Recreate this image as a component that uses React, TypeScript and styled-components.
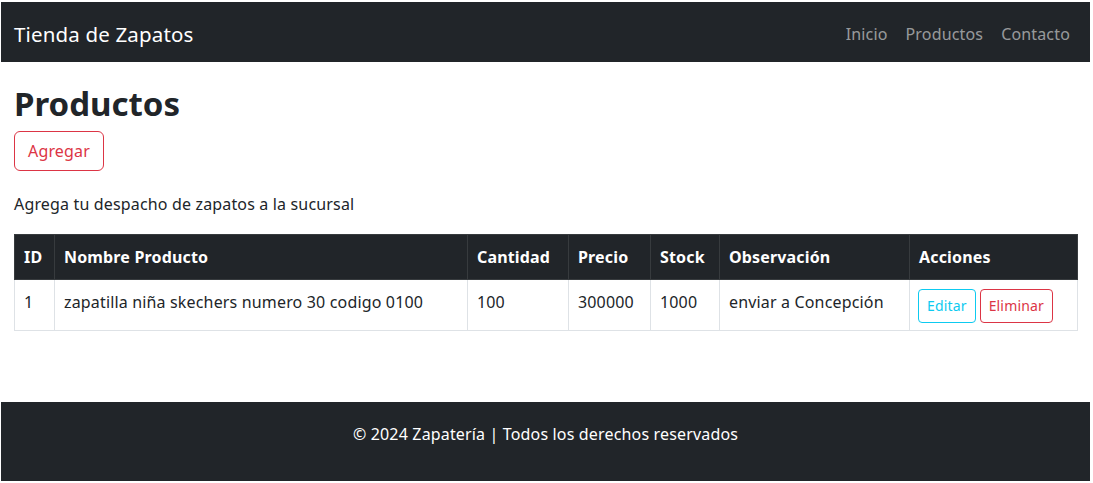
import React from "react";
import styled, { createGlobalStyle } from "styled-components";

const GlobalStyle = createGlobalStyle`
  html, body { margin: 0; padding: 0; background: #ffffff; }
  body {
    font-family: "Noto Sans", "Open Sans", sans-serif;
    font-size: 16px;
    line-height: 1.5;
    letter-spacing: 0.16px;
    color: #212529;
  }
  * { box-sizing: border-box; }
`;

const Page = styled.div`
  padding: 2px 3px 2px 1px;
  display: flex;
  flex-direction: column;
`;

const Navbar = styled.nav`
  height: 60px;
  background: #212529;
  display: flex;
  align-items: center;
  justify-content: space-between;
  padding: 4px 11px 0 13px;
`;

const Brand = styled.a`
  font-size: 20.5px;
  line-height: 30px;
  color: #ffffff;
  text-decoration: none;
`;

const NavList = styled.ul`
  list-style: none;
  margin: 0;
  padding: 0;
  display: flex;
`;

const NavLink = styled.a`
  display: block;
  padding: 8px 9px;
  font-size: 16px;
  line-height: 24px;
  color: rgba(255, 255, 255, 0.55);
  text-decoration: none;
`;

const Main = styled.main`
  padding: 0 12px 0 13px;
  display: flex;
  flex-direction: column;
  align-items: flex-start;
  min-height: 340px;
`;

const Title = styled.h1`
  margin: 22px 0 7px;
  font-size: 33px;
  line-height: 40px;
  font-weight: 700;
  letter-spacing: 0;
  color: #212529;
`;

const Button = styled.button<{ $variant: "danger" | "info"; $small?: boolean }>`
  font-family: inherit;
  letter-spacing: inherit;
  background: transparent;
  cursor: pointer;
  border: 1px solid ${(p) => (p.$variant === "danger" ? "#dc3545" : "#0dcaf0")};
  color: ${(p) => (p.$variant === "danger" ? "#dc3545" : "#0dcaf0")};
  font-size: ${(p) => (p.$small ? "14px" : "16px")};
  line-height: ${(p) => (p.$small ? "22px" : "24px")};
  padding: ${(p) => (p.$small ? "5px 8px" : "7px 13px")};
  border-radius: ${(p) => (p.$small ? "4px" : "6px")};
`;

const Lead = styled.p`
  margin: 21px 0 18px;
  font-size: 16px;
  line-height: 24px;
`;

const Table = styled.table`
  width: 1063px;
  border-collapse: collapse;
  table-layout: fixed;
  border: 1px solid #dee2e6;
`;

const Col = styled.col<{ $w: number }>`
  width: ${(p) => p.$w}px;
`;

const Th = styled.th`
  background: #212529;
  color: #ffffff;
  font-weight: 700;
  text-align: left;
  padding: 10px 9px;
  line-height: 24px;
  border: 1px solid #373b3e;
  vertical-align: top;
  white-space: nowrap;
`;

const Td = styled.td`
  padding: 10px 9px 7px;
  line-height: 24px;
  border: 1px solid #dee2e6;
  vertical-align: top;
  color: #212529;
`;

const Actions = styled.div`
  display: flex;
  gap: 4px;
  margin: -1px 0 0 -1px;
`;

const Footer = styled.footer`
  height: 79px;
  background: #212529;
  color: #ffffff;
  text-align: center;
  padding-top: 20px;
  font-size: 16px;
  line-height: 24px;
`;

const columns: [string, number][] = [
  ["ID", 40],
  ["Nombre Producto", 413],
  ["Cantidad", 101],
  ["Precio", 82],
  ["Stock", 69],
  ["Observación", 190],
  ["Acciones", 168],
];

export default function App() {
  return (
    <>
      <GlobalStyle />
      <Page>
        <Navbar>
          <Brand href="#">Tienda de Zapatos</Brand>
          <NavList>
            <li><NavLink href="#">Inicio</NavLink></li>
            <li><NavLink href="#">Productos</NavLink></li>
            <li><NavLink href="#">Contacto</NavLink></li>
          </NavList>
        </Navbar>
        <Main>
          <Title>Productos</Title>
          <Button $variant="danger">Agregar</Button>
          <Lead>Agrega tu despacho de zapatos a la sucursal</Lead>
          <Table>
            <colgroup>
              {columns.map(([name, w]) => (
                <Col key={name} $w={w} />
              ))}
            </colgroup>
            <thead>
              <tr>
                {columns.map(([name]) => (
                  <Th key={name}>{name}</Th>
                ))}
              </tr>
            </thead>
            <tbody>
              <tr>
                <Td>1</Td>
                <Td>zapatilla niña skechers numero 30 codigo 0100</Td>
                <Td>100</Td>
                <Td>300000</Td>
                <Td>1000</Td>
                <Td>enviar a Concepción</Td>
                <Td>
                  <Actions>
                    <Button $variant="info" $small>Editar</Button>
                    <Button $variant="danger" $small>Eliminar</Button>
                  </Actions>
                </Td>
              </tr>
            </tbody>
          </Table>
        </Main>
        <Footer>© 2024 Zapatería | Todos los derechos reservados</Footer>
      </Page>
    </>
  );
}
